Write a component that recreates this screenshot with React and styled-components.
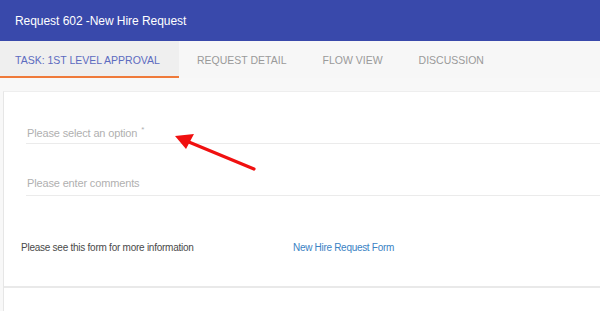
import React from 'react'
import styled, { createGlobalStyle } from 'styled-components'

const GlobalStyle = createGlobalStyle`
    html, body {
        margin: 0;
        padding: 0;
        background: #f8f8f8;
        font-family: "Liberation Sans", Arial, sans-serif;
        overflow: hidden;
    }
`

const tabs = ['Task: 1st Level Approval', 'Request Detail', 'Flow View', 'Discussion']

function App() {
    return (
        <Page>
            <GlobalStyle />
            <Header>Request 602 -New Hire Request</Header>
            <TabBar>
                {tabs.map((t, i) => (
                    <Tab key={t} $active={i === 0}>{t}</Tab>
                ))}
            </TabBar>
            <Card>
                <Section>
                    <Field>
                        <Label>Please select an option <Req>*</Req></Label>
                    </Field>
                    <Field>
                        <Label>Please enter comments</Label>
                    </Field>
                    <InfoRow>
                        <InfoText>Please see this form for more information</InfoText>
                        <Link href="#">New Hire Request Form</Link>
                    </InfoRow>
                </Section>
                <Section $last />
            </Card>
            <Arrow width="90" height="45" viewBox="0 0 90 45">
                <line x1="84" y1="40" x2="14" y2="11" stroke="#f01010" strokeWidth="3.2" strokeLinecap="round" />
                <polygon points="5,7 24,5 16,20" fill="#f01010" />
            </Arrow>
        </Page>
    )
}

export default App

const Page = styled.div`
    position: relative;
    width: 600px;
    height: 311px;
    overflow: hidden;
`

const Header = styled.div`
    height: 41px;
    background: #3949ab;
    color: #fff;
    font-size: 12px;
    letter-spacing: -0.05px;
    display: flex;
    align-items: center;
    padding-left: 15px;
`

const TabBar = styled.div`
    height: 37px;
    background: #f7f7f7;
    display: flex;
`

const Tab = styled.div`
    display: flex;
    align-items: center;
    justify-content: ${p => (p.$active ? 'flex-start' : 'center')};
    white-space: nowrap;
    box-sizing: border-box;
    width: ${p => (p.$active ? '179px' : 'auto')};
    padding: 2px 18px 0 ${p => (p.$active ? '15px' : '18px')};
    font-size: 10.5px;
    text-transform: uppercase;
    color: ${p => (p.$active ? '#5c6bc0' : '#9a9a9a')};
    background: ${p => (p.$active ? '#efefef' : 'transparent')};
    border-bottom: 2px solid ${p => (p.$active ? '#ef7a3a' : 'transparent')};
`

const Card = styled.div`
    margin: 13px 0 0 3px;
    background: #fff;
    border-left: 1px solid #e6e6e6;
    border-top: 1px solid #eeeeee;
`

const Section = styled.div`
    height: ${p => (p.$last ? '40px' : '194px')};
    padding-left: 22px;
    border-bottom: ${p => (p.$last ? 'none' : '2px solid #e9e9e9')};
    overflow: hidden;
`

const Field = styled.div`
    margin-top: 33px;
    height: 18px;
    border-bottom: 1px solid #ebebeb;
`

const Label = styled.div`
    font-size: 11px;
    letter-spacing: -0.15px;
    color: #b0b0b0;
    padding-left: 1px;
`

const Req = styled.sup`
    font-size: 8px;
    margin-left: 1px;
`

const InfoRow = styled.div`
    display: flex;
    align-items: center;
    margin: 46px 0 0 -5px;
    font-size: 10px;
    letter-spacing: -0.25px;
`

const InfoText = styled.span`
    color: #4a4a4a;
    width: 272px;
`

const Link = styled.a`
    color: #3a82c4;
    text-decoration: none;
    letter-spacing: -0.3px;
`

const Arrow = styled.svg`
    position: absolute;
    left: 170px;
    top: 129px;
`
